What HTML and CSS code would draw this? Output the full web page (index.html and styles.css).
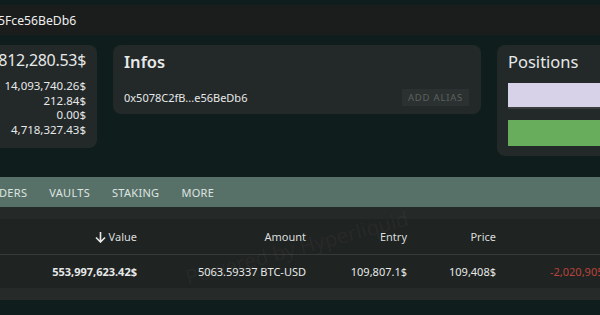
FILE: index.html
```html
<!DOCTYPE html>
<html lang="en">
  <head>
    <meta charset="UTF-8" />
    <meta name="viewport" content="width=device-width, initial-scale=1.0" />
    <title>Account 0x5078C2fB...e56BeDb6</title>
    <link rel="stylesheet" href="styles.css">
  </head>
  <body>
    <div class="topbar">
      <span class="topbar-addr">5Fce56BeDb6</span>
    </div>

    <div class="cards">
      <div class="card summary">
        <div class="total">812,280.53$</div>
        <div class="sub">14,093,740.26$</div>
        <div class="sub">212.84$</div>
        <div class="sub">0.00$</div>
        <div class="sub">4,718,327.43$</div>
      </div>

      <div class="card infos">
        <h3>Infos</h3>
        <div class="info-line">
          <span>0x5078C2fB...e56BeDb6</span>
          <button class="alias-btn">Add alias</button>
        </div>
      </div>

      <div class="card positions">
        <h3>Positions</h3>
        <div class="pos-bar lavender"></div>
        <div class="pos-bar green"></div>
      </div>
    </div>

    <div class="tabs">
      <span class="tab">Orders</span>
      <span class="tab">Vaults</span>
      <span class="tab">Staking</span>
      <span class="tab">More</span>
    </div>

    <div class="table-wrap">
      <div class="band"></div>
      <div class="row head">
        <div class="cell">
          <svg class="sort" width="11" height="12" viewBox="0 0 11 12">
            <path d="M5.5 1v10M1 6.5l4.5 4.5 4.5-4.5" fill="none" stroke="currentColor" stroke-width="1.6" />
          </svg>
          Value
        </div>
        <div class="cell">Amount</div>
        <div class="cell">Entry</div>
        <div class="cell">Price</div>
        <div class="cell pnl"></div>
      </div>
      <div class="row">
        <div class="cell strong">553,997,623.42$</div>
        <div class="cell">5063.59337 BTC-USD</div>
        <div class="cell">109,807.1$</div>
        <div class="cell">109,408$</div>
        <div class="cell pnl red">-2,020,905.47$</div>
      </div>
      <div class="band bottom"></div>
      <div class="watermark">Powered by Hyperliquid</div>
    </div>
  </body>
</html>
```

FILE: styles.css
```css
* {
  box-sizing: border-box;
  margin: 0;
  padding: 0;
}
body {
  font-family: "Noto Sans", "Open Sans", sans-serif;
  background: #0f1e1c;
  color: #e6e9e8;
  overflow: hidden;
  height: 315px;
}
.topbar {
  margin-top: 5px;
  height: 30px;
  background: #1b1d1d;
  display: flex;
  align-items: center;
  margin-left: -2px;
}
.topbar-addr {
  font-size: 12.2px;
  color: #eef0ef;
}
.cards {
  display: flex;
  gap: 16px;
  margin-top: 10px;
  margin-left: -120px;
  align-items: flex-start;
}
.card {
  background: #232828;
  border-radius: 8px;
  flex-shrink: 0;
}
.summary {
  width: 217px;
  height: 103px;
  text-align: right;
  padding: 5px 11px 0 0;
}
.total {
  font-size: 16px;
  letter-spacing: -0.3px;
  line-height: 21px;
  margin-bottom: 8px;
}
.sub {
  font-size: 11.5px;
  line-height: 14.5px;
}
.infos {
  width: 368px;
  height: 69px;
  padding: 5px 12px 0 11px;
}
.infos h3,
.positions h3 {
  font-weight: 600;
  font-size: 16.5px;
  line-height: 24px;
}
.positions h3 {
  font-weight: 400;
}
.info-line {
  display: flex;
  justify-content: space-between;
  align-items: center;
  margin-top: 15px;
  font-size: 11px;
}
.alias-btn {
  font-family: inherit;
  background: #2b3130;
  color: #5b6160;
  border: none;
  font-size: 9.5px;
  letter-spacing: 0.8px;
  text-transform: uppercase;
  width: 67px;
  height: 17px;
}
.positions {
  width: 200px;
  height: 111px;
  padding: 5px 0 0 11px;
}
.pos-bar {
  height: 26px;
}
.pos-bar.lavender {
  background: #d8d2e8;
  margin-top: 9px;
  border-bottom: 2px solid #3a3d3f;
}
.pos-bar.green {
  background: #67ad5b;
  margin-top: 11px;
}
.tabs {
  margin-top: 21px;
  height: 30px;
  background: #587168;
  display: flex;
  align-items: center;
  gap: 22px;
  margin-left: -17px;
}
.tab {
  font-size: 11px;
  letter-spacing: 0.3px;
  text-transform: uppercase;
  color: #dfe4e2;
}
.table-wrap {
  position: relative;
  background: #1f2322;
  overflow: hidden;
}
.band {
  height: 12px;
  background: #252a29;
}
.band.bottom {
  background: #262b2a;
}
.row {
  display: grid;
  grid-template-columns: 137px 169px 101px 89px 1fr;
  height: 33px;
  align-items: center;
  font-size: 11px;
  white-space: nowrap;
}
.row.head {
  height: 36px;
  border-bottom: 1px solid #363b3a;
  color: #dadedd;
}
.cell {
  display: flex;
  justify-content: flex-end;
  align-items: center;
  gap: 3px;
}
.cell.pnl {
  justify-content: flex-start;
  padding-left: 54px;
}
.cell.strong {
  font-weight: 700;
}
.red {
  color: #b9433a;
}
.sort {
  color: #e6e9e8;
}
.watermark {
  position: absolute;
  left: 186px;
  top: 56px;
  font-size: 20.5px;
  color: rgba(255, 255, 255, 0.045);
  transform: rotate(-15deg);
  transform-origin: left center;
  white-space: nowrap;
  pointer-events: none;
}
```
